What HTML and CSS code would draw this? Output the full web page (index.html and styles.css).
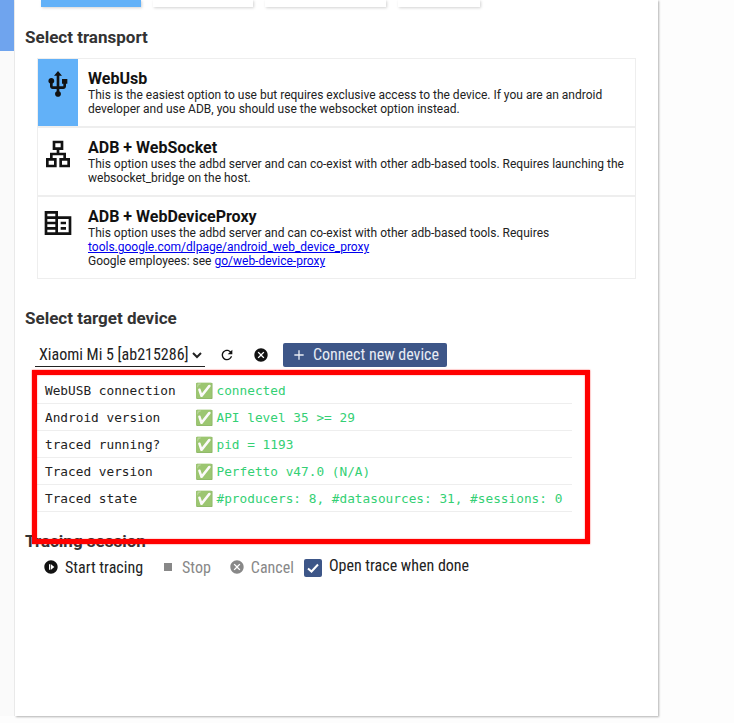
FILE: index.html
```html
<!DOCTYPE html>
<html lang="en">
<head>
<meta charset="utf-8">
<title>Record new trace</title>
<link rel="stylesheet" href="styles.css">
</head>
<body>
<div class="page">
  <aside class="sidebar"><div class="side-active"></div></aside>
  <main class="panel">
    <div class="tabs">
      <div class="tab tab-active tab-a"></div>
      <div class="tab tab-a"></div>
      <div class="tab tab-b"></div>
      <div class="tab tab-c"></div>
    </div>
    <h2 class="heading heading-transport">Select transport</h2>
    <div class="transports">
      <div class="transport">
        <div class="t-icon t-icon-active"><svg class="big-icon" viewBox="0 0 24 24"><path d="M15 7.500v3.500h1v2h-3V5h2l-3-3.500-3 3.500h2v8H8v-2.070c.7-.37 1.200-1.080 1.200-1.930 0-1.210-.99-2.200-2.200-2.200-1.210 0-2.200.99-2.200 2.200 0 .85.5 1.560 1.200 1.930V13c0 1.110.89 2 2 2h3v1.750c-.71.37-1.200 1.100-1.200 1.950 0 1.220.99 2.200 2.200 2.200 1.210 0 2.200-.98 2.200-2.200 0-.85-.49-1.580-1.200-1.950V15h3c1.110 0 2-.89 2-2v-2h1V7.500h-4z"/></svg></div>
        <div class="t-body">
          <div class="t-title">WebUsb</div>
          <div class="t-desc">This is the easiest option to use but requires exclusive access to the device. If you are an android developer and use ADB, you should use the websocket option instead.</div>
        </div>
      </div>
      <div class="transport">
        <div class="t-icon"><svg class="big-icon" viewBox="0 0 24 24"><path d="M13 22h8v-7h-3v-4h-5V9h3V2H8v7h3v2H6v4H3v7h8v-7H8v-2h8v2h-3v7zM10 7V4h4v3h-4zM9 17v3H5v-3h4zm10 0v3h-4v-3h4z"/></svg></div>
        <div class="t-body">
          <div class="t-title">ADB + WebSocket</div>
          <div class="t-desc">This option uses the adbd server and can co-exist with other adb-based tools. Requires launching the websocket_bridge on the host.</div>
        </div>
      </div>
      <div class="transport">
        <div class="t-icon"><svg class="big-icon" viewBox="0 0 24 24"><path d="M12 7V3H2v18h20V7H12zm-2 12H4v-2h6v2zm0-4H4v-2h6v2zm0-4H4V9h6v2zm0-4H4V5h6v2zm10 12h-8V9h8v10zm-2-8h-4v2h4v-2zm0 4h-4v2h4v-2z"/></svg></div>
        <div class="t-body">
          <div class="t-title">ADB + WebDeviceProxy</div>
          <div class="t-desc">This option uses the adbd server and can co-exist with other adb-based tools. Requires<br><a href="#">tools.google.com/dlpage/android_web_device_proxy</a><br>Google employees: see <a href="#">go/web-device-proxy</a></div>
        </div>
      </div>
    </div>
    <h2 class="heading heading-target">Select target device</h2>
    <div class="device-row">
      <select class="device-select"><option>Xiaomi Mi 5 [ab215286]</option></select>
      <svg class="small-icon refresh" viewBox="0 0 24 24"><path d="M17.65 6.35C16.2 4.9 14.21 4 12 4c-4.42 0-7.99 3.58-7.99 8s3.57 8 7.99 8c3.73 0 6.84-2.55 7.73-6h-2.08c-.82 2.33-3.04 4-5.65 4-3.31 0-6-2.69-6-6s2.69-6 6-6c1.66 0 3.14.69 4.22 1.78L13 11h7V4l-2.35 2.35z"/></svg>
      <svg class="small-icon close" viewBox="0 0 24 24"><path d="M12 2C6.47 2 2 6.47 2 12s4.47 10 10 10 10-4.47 10-10S17.53 2 12 2zm5 13.59L15.59 17 12 13.41 8.41 17 7 15.59 10.59 12 7 8.41 8.41 7 12 10.59 15.59 7 17 8.41 13.41 12 17 15.59z"/></svg>
      <button class="connect"><svg class="plus" viewBox="0 0 24 24"><path d="M19 13h-6v6h-2v-6H5v-2h6V5h2v6h6v2z"/></svg><span class="connect-label">Connect new device</span></button>
    </div>
    <div class="checks">
      <div class="check"><span class="c-label">WebUSB connection</span><span class="tick">✅</span><span class="c-value">connected</span></div>
      <div class="check"><span class="c-label">Android version</span><span class="tick">✅</span><span class="c-value">API level 35 &gt;= 29</span></div>
      <div class="check"><span class="c-label">traced running?</span><span class="tick">✅</span><span class="c-value">pid = 1193</span></div>
      <div class="check"><span class="c-label">Traced version</span><span class="tick">✅</span><span class="c-value">Perfetto v47.0 (N/A)</span></div>
      <div class="check"><span class="c-label">Traced state</span><span class="tick">✅</span><span class="c-value">#producers: 8, #datasources: 31, #sessions: 0</span></div>
    </div>
    <h2 class="heading heading-session">Tracing session</h2>
    <div class="controls">
      <span class="ctl"><svg class="small-icon" viewBox="0 0 24 24"><path d="M12 2C6.48 2 2 6.48 2 12s4.48 10 10 10 10-4.48 10-10S17.52 2 12 2zm-1 14H9V8h2v8zm1 0V8l5 4-5 4z"/></svg>Start tracing</span>
      <span class="ctl ctl-off ctl-stop"><svg class="small-icon" viewBox="0 0 24 24"><path d="M6 6h12v12H6z"/></svg>Stop</span>
      <span class="ctl ctl-off ctl-cancel"><svg class="small-icon" viewBox="0 0 24 24"><path d="M12 2C6.47 2 2 6.47 2 12s4.47 10 10 10 10-4.47 10-10S17.53 2 12 2zm5 13.59L15.59 17 12 13.41 8.41 17 7 15.59 10.59 12 7 8.41 8.41 7 12 10.59 15.59 7 17 8.41 13.41 12 17 15.59z"/></svg>Cancel</span>
      <label class="open-trace"><span class="box"><svg viewBox="0 0 18 18"><path d="M4 9.500 7.500 12.500 14 5.500"/></svg></span>Open trace when done</label>
    </div>
    <div class="annotation"></div>
  </main>
</div>
</body>
</html>
```
FILE: styles.css
```css
* { box-sizing: border-box; }
html, body { margin: 0; height: 100%; overflow: hidden; background: #fdfdfd; }
body { font-family: Roboto, "Liberation Sans", sans-serif; color: #121212; }
.page { display: flex; height: 723px; align-items: flex-start; }
.sidebar { width: 15px; height: 716px; background: #fafafa; border-right: 1px solid #eee; flex: none; }
.side-active { width: 14px; height: 51px; background: #6fa4ee; }
.panel { position: relative; width: 643px; height: 716px; background: #fff; padding-left: 10px; box-shadow: 1px 1px 2px rgba(0,0,0,.3); flex: none; }
.tabs { display: flex; gap: 12px; height: 7px; margin-left: 16px; }
.tab { height: 7px; background: #fff; box-shadow: 1px 1px 3px rgba(0,0,0,.18); }
.tab-a { width: 100px; }
.tab-b { width: 121px; }
.tab-c { width: 82px; }
.tab-active { background: #62b1f8; }
.heading { margin: 0; font-size: 17px; line-height: 20px; font-weight: 700; color: #333; }
.heading-transport { margin-top: 20px; }
.transports { width: 599px; margin: 11px 0 0 12px; border: 1px solid #eee; }
.transport { display: flex; border-bottom: 2px solid #eee; min-height: 69px; }
.transport:last-child { border-bottom: 0; min-height: 81px; }
.t-icon { width: 40px; flex: none; display: flex; justify-content: center; padding-top: 10px; }
.t-icon-active { background: #62b1f8; }
.big-icon { width: 32px; height: 32px; fill: #121212; }
.t-body { padding: 10px 0 0 10px; flex: 1; }
.t-title { font-size: 16px; line-height: 19px; font-weight: 700; }
.t-desc { font-size: 12px; line-height: 14px; color: #222; }
a { color: #0000ee; }
.heading-target { margin-top: 29px; }
.device-row { display: flex; align-items: center; margin: 15px 0 0 10px; height: 24px; }
.device-select { width: 170px; height: 23px; border: 0; border-bottom: 1px solid #222; background: #fff; padding: 0; font-family: Roboto, sans-serif; font-stretch: 75%; font-size: 16px; color: #222; outline: 0; }
.small-icon { width: 16px; height: 16px; fill: #121212; flex: none; }
.refresh { margin-left: 14px; }
.close { margin-left: 18px; }
.connect { display: flex; align-items: center; margin-left: 14px; width: 164px; height: 24px; padding: 0 0 0 8px; border: 0; border-radius: 2px; background: #3d5688; color: #e8ecf4; font-family: Roboto, sans-serif; font-stretch: 75%; font-size: 16px; line-height: 22px; }
.connect-label { margin-top: -1px; }
.plus { width: 16px; height: 16px; fill: #e8ecf4; margin-right: 6px; }
.checks { width: 536px; margin: 10px 0 0 11px; font-family: "DejaVu Sans Mono", "Liberation Mono", monospace; font-size: 12.77px; }
.check { display: flex; align-items: center; height: 27px; border-bottom: 1px solid #eee; padding: 1px 0 0 9px; }
.c-label { width: 150px; color: #222; flex: none; }
.tick { width: 21.500px; flex: none; font-size: 15px; opacity: .75; }
.c-value { color: #34d074; }
.heading-session { margin-top: 19px; }
.controls { display: flex; align-items: center; margin: 4px 0 0 18px; height: 24px; font-stretch: 75%; font-size: 16px; }
.ctl { display: flex; align-items: center; gap: 6px; color: #222; }
.ctl-off { color: #888; }
.ctl-off .small-icon { fill: #888; }
.ctl-stop { margin-left: 17px; }
.ctl-cancel { margin-left: 18px; }
.open-trace { display: flex; align-items: flex-start; gap: 7px; margin: 1px 0 -1px 10px; color: #222; line-height: 14px; }
.box { width: 18px; height: 18px; border-radius: 2px; background: #3d5688; flex: none; }
.box svg { display: block; fill: none; stroke: #fff; stroke-width: 2; }
.annotation { position: absolute; left: 17px; top: 370px; width: 558px; height: 174px; border: 5px solid #f00; box-shadow: 0 0 1.500px rgba(255,0,0,.7), inset 0 0 1.500px rgba(255,0,0,.7); }
```
